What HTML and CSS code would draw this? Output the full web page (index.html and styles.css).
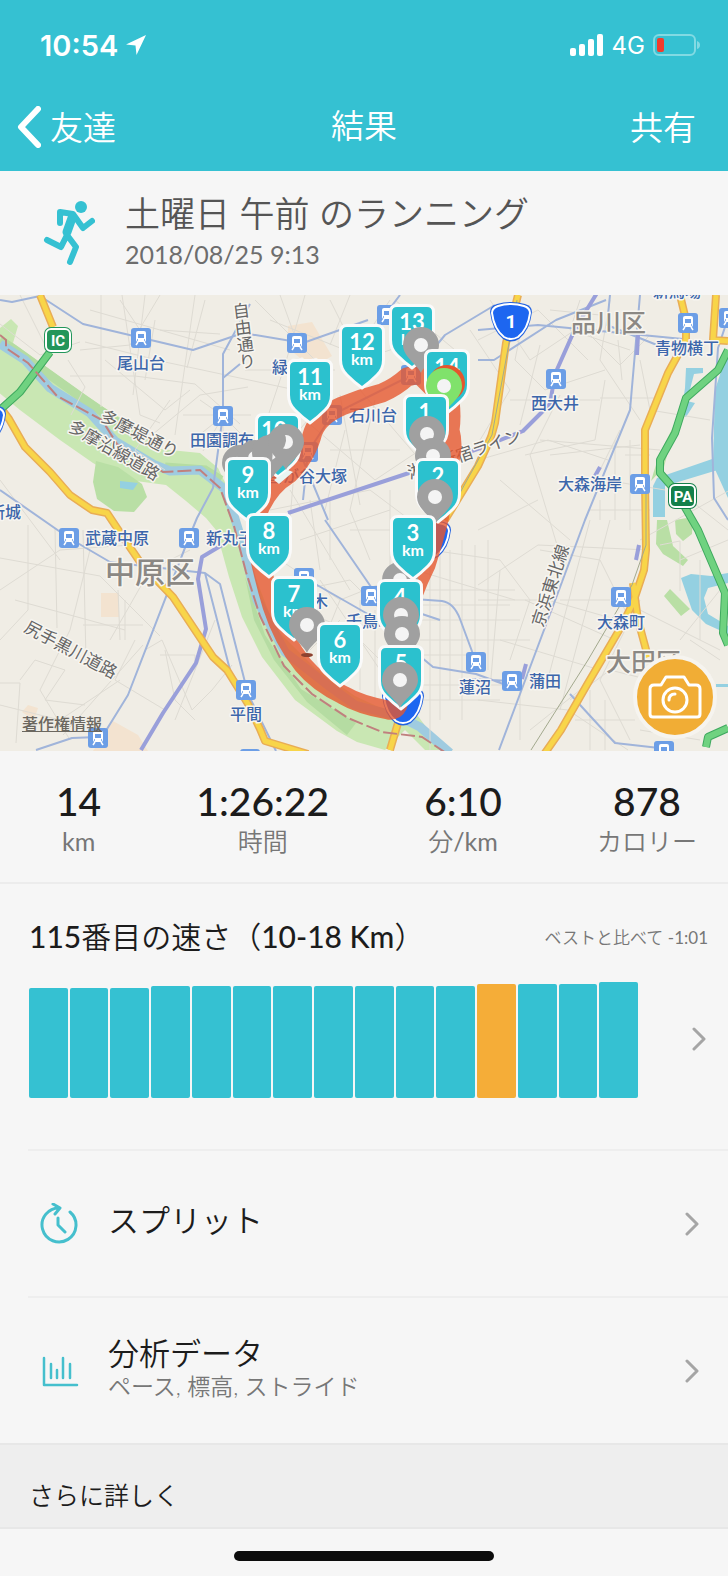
FILE: index.html
```
<!DOCTYPE html>
<html lang="ja">
<head>
<meta charset="utf-8">
<meta name="viewport" content="width=device-width, initial-scale=1">
<title>結果</title>
<link rel="stylesheet" href="styles.css">
</head>
<body>
<header class="top">
  <div class="status">
    <div class="status-left">
      <span class="clock">10:54</span>
      <svg class="locate" viewBox="0 0 20 20" aria-hidden="true"><path d="M20 0 10.500 20 9.500 10.500 0 9.500z"/></svg>
    </div>
    <div class="status-right">
      <svg class="signal" viewBox="0 0 34 22" aria-hidden="true"><rect x="0" y="14" width="6" height="8" rx="2"/><rect x="9" y="10" width="6" height="12" rx="2"/><rect x="18" y="5" width="6" height="17" rx="2"/><rect x="27" y="0" width="6" height="22" rx="2"/></svg>
      <span class="network">4G</span>
      <svg class="battery" viewBox="0 0 48 22" aria-hidden="true"><rect x="1" y="1" width="41" height="20" rx="5" fill="none" stroke="#82dae3" stroke-width="2"/><path d="M44 7q3 1 3 4t-3 4z" fill="#82dae3"/><rect x="4" y="4" width="7" height="14" rx="2" fill="#f23b2c"/></svg>
    </div>
  </div>
  <nav class="nav">
    <button class="nav-btn" type="button"><svg class="back" viewBox="0 0 24 42" aria-hidden="true"><path d="M21 3 4 21l17 18"/></svg>友達</button>
    <h1 class="nav-title">結果</h1>
    <button class="nav-btn nav-share" type="button">共有</button>
  </nav>
</header>

<main>
<section class="activity">
  <svg class="runner" viewBox="0 1 52 66" aria-hidden="true"><circle cx="38" cy="8" r="6"/><path d="M17 24V13l13 2 10 14 9-7M4 41l14 7 6-12 9 12-6 15" class="limbs"/><path d="M29 19l-5 14" class="limbs torso"/></svg>
  <div class="activity-text">
    <h2 class="activity-title">土曜日 午前 のランニング</h2>
    <time class="activity-date" datetime="2018-08-25T09:13">2018/08/25 9:13</time>
  </div>
</section>

<section class="map" aria-label="ルート">
<svg class="map-canvas" viewBox="0 295 728 456">
<defs>
  <g id="station"><rect x="-10" y="-10" width="20" height="20" rx="3" fill="#6c9ee6"/><rect x="-5" y="-7" width="10" height="11" rx="2" fill="#fff"/><rect x="-3" y="-4" width="6" height="4" fill="#6c9ee6"/><path d="M-4 2h1M3 2h1" stroke="#6c9ee6" stroke-width="1.500"/><path d="M-3 4-5 7M3 4 5 7" stroke="#fff" stroke-width="1.500"/></g>
  <path id="km-pin" d="M-20 5q0-5 5-5h30q5 0 5 5v28q0 8-6 14-7 7-14 12-7-5-14-12-6-6-6-14z"/>
  <g id="drop"><path d="M0 28C-3 20-18 12-18 0A18 18 0 0 1 18 0C18 12 3 20 0 28z"/><circle r="7" fill="#f4f4f4"/></g>
  <g id="shield"><path d="M-14-18Q0-22 14-18 21-16 21-10 19 8 8 17q-8 5-16 0Q-19 8-21-10q0-6 7-8z" fill="#2262e0"/><path d="M-13-16Q0-20 13-16 19-14 19-9 17 7 7 15q-7 4-14 0Q-17 7-19-9q0-5 6-7z" fill="#1d66f0" stroke="#fff" stroke-width="2"/></g>
</defs>
<rect y="295" width="728" height="456" fill="#f0ede5"/>

<g class="parks">
  <path d="M0 328l11-9 7 7-5 17 65 47 22 15 35 22 25 22 40 4 18 15 17 35 15 60 25 65 40 40 40 28 30 14 30 2 28 38h-18l-20-20-20 20-28-8-20-11-42-31-33-43-20-40-13-40-13-47-10-12-20-17-20-16-45-6-28-16-33-23-40-30-40-33z" fill="#c9e7b3"/>
  <path d="M0 340 15 350 85 400l35 24M165 467l40 3 16 10" fill="none" stroke="#b5dca2" stroke-width="9"/>
  <path d="M245 577l20 58 36 54 55 34-9 12-40-33-33-42-20-40z" fill="#b5dca2"/>
  <path d="M96 461l22 6 24 17 5 13-13 15-20-1-17-12-4-17z" fill="#b9dfa5"/>
  <path d="M676 421l-12 46-13 14 8-26z" fill="#b9dfa5"/>
  <path d="M721 425h7v28h-7zM657 520h10l6 26 15 14-5 6-20-12-7-10zM675 520l18-3-1 17-9 7-7-7zM670 589l20 20-9 7-17-20z" fill="#b9dfa5"/>
</g>
<g fill="#f3e3d0"><path d="M101 593h18v24h-18zM113 721l25 14 10 16h-55zM288 326l24-4 20 34-20 12-24-20zM28 705l10 3-4 12-12-8z"/></g>
<g class="water">
  <path d="M0 344 25 360 50 388l40 25 25 28 40 24 15 6 30-1 26 20 14 45 17 65 28 52 40 31 30 22 45 12 20 10 30 26" fill="none" stroke="#9fcbe0" stroke-width="9" stroke-linejoin="round"/>
  <path d="M686 368h17v5l-9 1-7 27 8 2-9 14-5-2 4-27z"/>
  <path d="M728 350l-13 40-2 75 15 33z"/>
  <path d="M718 457l-61 21-4 8v31h12v-31l56-17z"/>
  <path d="M681 578l10-4 20 2 17-3v10l-20 5-4 10 4 16 20 12v8l-22-10-14-14z"/>
  <path d="M120 481l18 2-5 7-13-2zM716 684h12v3h-12z"/>
</g>

<g class="streets">
  <path d="M0 324 40 355 80 342M68 360l17 27-14 28M80 350l50-5 30-50M20 295l30 60M85 342l80 20 140 30M101 295v112M122 295l18 120 20 8M145 295l-12 100M195 295l-20 140M205 300l-18 68M70 376h65l60 8 45 40M105 360l60 50 25-20M170 400l-35 50 30 20M140 445l60-50 48-8M90 310l140 40M160 330l60 4M145 380l10-60M183 415h68M193 440l30-24 30 30M200 400l23 16-20 35M223 395v45"/>
  <path d="M0 480l60 80M28 525v85l-28 30M0 558l100 18 60 60M55 528l2 100M83 530l3 130M0 590l60-40 70-5M15 600l110 30M83 625h60M125 600v40M118 590l2 50M135 640l-20 40 50 30M145 650l17-10 30 70 20-20 20-25M20 680l15-20 30 10-20 30 40 5M0 683h20l-4 60M0 705l60 15 60-40M63 735l80-90M165 650l10 50 20 20M160 655h35v15M90 550l-20 80-30 60 30 50M110 640l40-70 40-20M175 720l40-100"/>
  <path d="M255 300l60 60M280 295l18 50M305 295l-20 70-30 90M330 300l30 60 60-20M350 295l-20 50M270 320l100 40M390 300l-40 60M245 370h90M395 300l60 50M430 310v60M470 330l40 60-30 50M340 395l20 110M360 390l60 70M325 400l-60 70M305 420l70 60 60-40M330 450h70M345 430l-20 80M300 400l-10 120M375 400l-25 110 20 50M290 490l60 100M270 510l100-20 40 30M310 500l10 70M330 500v60M390 490v110M350 530h70M300 540l90-30M280 560l60 40 50-20"/>
  <path d="M300 590l50-10 60 60M320 580l60 90M340 600l-20 50M350 630l60 60M300 610l50 20 50-20M360 600v90M375 610v90M430 550l70 10M430 560v190M440 540v180M450 550v150M462 540v180M475 545v110M488 540v130M425 590h90M420 605h90M420 620h100M420 640h110M420 655h60M420 685h90M420 700h80M500 570l-10 120M415 570l100 30M310 650l30-30M120 300l20 30"/>
  <path d="M478 340l60-30 50 50M490 300l40 60 60-40M510 400h90M525 310l-10 50 30 30 60-20M540 345l-20 80M590 335l30 30 30-30M605 380l-10 60-70 15M560 395l-30 60 30 100M600 398h60M478 460l70-20 60 20M500 480l70 60M540 440l120 10M610 300l-10 60 40 60M620 430l-30 60M640 360l10 50 60 10M550 455l90-10M630 440v90M615 440v80M605 480l60 10M590 510h60M600 500v20M625 455h25M478 530l60-30M618 340l4 40M580 300l-10 30 60 20M550 310l50 5"/>
  <path d="M478 585l60-40 110 5M500 560l30 40-20 60M478 600h70l70 20M540 550l60 10 30 60M590 520l-45 170M610 520l-50 190M478 700l90 10 60 40M525 600l90 40M560 600h50M500 640l100 30M640 600l-40 80M600 680l30 60M640 610l80 40M680 560l48-20M640 540l90-50M690 500l38 30M680 640l40-50M690 640l30 20M650 680l-40-10-40 30M590 690v60M605 700v50M575 720h60M530 730l50-40M640 730l60 10M520 690v50M700 560v80M660 545l20-4v50"/>
</g>

<g class="rail">
  <path d="M0 300l12 2 28-6 43 28 110 26 50-17 60 10 65-23"/>
  <path d="M0 490 69 538 110 562l25 3 70 8 15 11 28 110 28 57M250 304l-27 50v60l-10 74-16 30-9 22-60 155-26 42M36 750l36-12 26-1M240 364l-17 14M205 573l25 97M303 500l5-48 24-37 80-40 33-40 50-30M400 295l-15 20M325 520l55 80 60 20M303 577l70 40 60 50 43 7 30 11M372 596l70 5q12 2 18 18l16 43M478 330l60-5 145 14M478 360h16l62-40 50-20M610 295l-3 30 50 20M640 295l-10 115-45 110-26 70-60 160M512 681l-40-2M570 694l45 49 53 6M728 318l-10 30-6 90 2 60 14 22M303 460l25 60"/>
</g>
<g class="rail-main">
  <path d="M288 513l130-43 65-23 40-16 27-27 5-30 20-45 22-36M222 545l-20 12-4 22 8 50-10 34-33 50-22 37M638 335l-1 20M600 467l-5 9M639 545l-3 15M526 664l-4 15"/>
</g>

<g class="road-case">
  <path d="M40 295 53 327M0 407l9 12 16 28 25 25 20 23 22 15 15 3 18 27 17 25 31 32 40 60 14 13 21 34 12 25 5 12 43 13M518 295 506 343 495 423 491 437 478 466 445 520M398 723l-8 27M680 295l6 25v20l-18 33-23 57v50l1 70-2 20-11 33-12 24-33 56-27 47-30 43M633 583l5 37 10 37M716 295l-3 45 15 1"/>
</g>
<g class="road">
  <path d="M40 295 53 327M0 407l9 12 16 28 25 25 20 23 22 15 15 3 18 27 17 25 31 32 40 60 14 13 21 34 12 25 5 12 43 13M518 295 506 343 495 423 491 437 478 466 445 520M398 723l-8 27M680 295l6 25v20l-18 33-23 57v50l1 70-2 20-11 33-12 24-33 56-27 47-30 43M633 583l5 37 10 37M716 295l-3 45 15 1"/>
</g>
<path d="M517 300 492 435 445 520M646 480v65l-14 40-44 75-57 90" fill="none" stroke="#a3a98e"/>
<g fill="none" stroke-linejoin="round"><path d="M50 352 20 392 0 410M728 350l-10 20-32 28-11 35-15 27v13l15 17 23 40 27 63-2 40 5 12M728 728l-20 9-2 10" stroke="#3fa95f" stroke-width="8"/><path d="M50 352 20 392 0 410M728 350l-10 20-32 28-11 35-15 27v13l15 17 23 40 27 63-2 40 5 12M728 728l-20 9-2 10" stroke="#6fd280" stroke-width="6"/></g>
<path d="M0 335l6 5v8l22 15 15 17 14 16 45 24 15 24 25 14 21 14 37-2 20 18 14 38 12 46 14 44 24 50 28 28 36 24 34 14 40 5 30 20" fill="none" stroke="#c0807e" stroke-width="2" stroke-dasharray="14 4"/>

<g class="badges">
  <use href="#shield" x="511" y="322"/><text x="511" y="328" class="badge-text">1</text>
  <use href="#shield" x="430" y="540"/>
  <use href="#shield" x="403" y="706"/>
  <use href="#shield" x="-15" y="424"/>
  <rect x="44" y="327" width="28" height="26" rx="7" fill="#23965a"/><rect x="46" y="329" width="24" height="22" rx="5" fill="#23965a" stroke="#fff" stroke-width="2"/><text x="58" y="346" class="badge-text badge-small">IC</text>
  <rect x="668" y="483" width="29" height="26" rx="7" fill="#14804a"/><rect x="670" y="485" width="25" height="22" rx="5" fill="#14804a" stroke="#fff" stroke-width="2"/><text x="683" y="502" class="badge-text badge-small">PA</text>
</g>

<use href="#station" x="141" y="338"/><use href="#station" x="297" y="343"/><use href="#station" x="387" y="315"/><use href="#station" x="332" y="415"/><use href="#station" x="308" y="452"/><use href="#station" x="556" y="379"/><use href="#station" x="688" y="323"/><use href="#station" x="729" y="318"/><use href="#station" x="640" y="484"/><use href="#station" x="223" y="416"/><use href="#station" x="69" y="538"/><use href="#station" x="189" y="538"/><use href="#station" x="98" y="738"/><use href="#station" x="246" y="690"/><use href="#station" x="304" y="578"/><use href="#station" x="371" y="596"/><use href="#station" x="476" y="662"/><use href="#station" x="250" y="759"/><use href="#station" x="621" y="597"/><use href="#station" x="512" y="681"/><use href="#station" x="664" y="751"/><use href="#station" x="411" y="375"/>

<g class="place">
  <text x="117" y="369">尾山台</text><text x="190" y="446">田園調布</text><text x="-11" y="518">新城</text><text x="272" y="373">緑が丘</text><text x="349" y="421">石川台</text><text x="267" y="482">雪が谷大塚</text><text x="655" y="354">青物横丁</text><text x="653" y="297">新馬場</text><text x="531" y="409">西大井</text><text x="558" y="490">大森海岸</text><text x="85" y="544">武蔵中原</text><text x="206" y="544">新丸子</text><text x="230" y="720">平間</text><text x="346" y="627">千鳥町</text><text x="280" y="607">鵜の木</text><text x="459" y="693">蓮沼</text><text x="529" y="687">蒲田</text><text x="597" y="628">大森町</text>
</g>
<g class="street-name">
  <text transform="translate(240 302) rotate(-7)" class="vertical">自由通り</text>
  <text transform="translate(99 420) rotate(27)">多摩堤通り</text>
  <text transform="translate(67 430) rotate(30)">多摩沿線道路</text>
  <text transform="translate(23 631) rotate(28)">尻手黒川道路</text>
  <text transform="translate(543 628) rotate(-72)">京浜東北線</text>
  <text transform="translate(410 479) rotate(-19)">湘南新宿ライン</text>
</g>
<g class="ward"><text x="571" y="332">品川区</text><text x="606" y="671">大田区</text><text x="105" y="583" class="ward-large">中原区</text></g>

<path class="route" d="M447 385q6 25 3 45 4 15 0 30-6 20-10 55-5 22-14 50-15 30-22 60l-5 45-1 35q-3 6-10 5-28-5-45-15-25-12-40-30-20-25-31-59-8-26-15-60-2-16 2-36 10-24 30-36 18-18 24-42 6-16 29-26 20-8 40-13 14-6 25-16l12-3 14 14 14 8"/>

<g class="pins">
  <use href="#km-pin" x="412" y="307"/><text x="412" y="330">13</text><text x="412" y="345" class="unit">km</text>
  <use href="#drop" x="421" y="345" class="grey"/>
  <use href="#km-pin" x="447" y="352"/><text x="447" y="375">14</text>
  <circle cx="447" cy="383" r="18" fill="#e4572e"/><use href="#drop" x="444" y="386" class="green"/>
  <use href="#km-pin" x="362" y="327"/><text x="362" y="350">12</text><text x="362" y="365" class="unit">km</text>
  <use href="#km-pin" x="278" y="416"/><text x="274" y="438">10</text>
  <path d="M274 480l14-10 5 2-14 12z" fill="#e8f4f3"/>
  <use href="#drop" x="240" y="463" class="grey"/><use href="#drop" x="255" y="458" class="grey"/>
  <path d="M262 439l20-14 18 27-32 24-18-8z" class="grey"/><use href="#drop" x="270" y="453" class="grey"/><path d="M257 443l12-3q5 7 3 22l-15-2z" class="grey"/>
  <use href="#drop" x="286" y="442" class="grey"/><path d="M275 433h9q5 8-2 17h-8z" class="grey"/>
  <use href="#km-pin" x="310" y="362"/><text x="310" y="385">11</text><text x="310" y="400" class="unit">km</text>
  <use href="#km-pin" x="248" y="460"/><text x="248" y="483">9</text><text x="248" y="498" class="unit">km</text>
  <use href="#km-pin" x="269" y="516"/><text x="269" y="539">8</text><text x="269" y="554" class="unit">km</text>
  <use href="#km-pin" x="294" y="579"/><text x="294" y="602">7</text><text x="294" y="617" class="unit">km</text>
  <ellipse cx="307" cy="655" rx="6" ry="2" fill="#8d4230"/><use href="#drop" x="307" y="625" class="grey"/>
  <use href="#km-pin" x="340" y="625"/><text x="340" y="648">6</text><text x="340" y="663" class="unit">km</text>
  <use href="#km-pin" x="426" y="397"/><text x="425" y="420">1</text>
  <use href="#drop" x="427" y="434" class="grey"/><use href="#drop" x="433" y="456" class="grey"/>
  <use href="#km-pin" x="438" y="461"/><text x="438" y="484">2</text><use href="#drop" x="435" y="497" class="grey"/>
  <use href="#drop" x="400" y="580" class="grey"/>
  <use href="#km-pin" x="413" y="518"/><text x="413" y="541">3</text><text x="413" y="556" class="unit">km</text>
  <use href="#km-pin" x="400" y="582"/><text x="400" y="605">4</text>
  <use href="#drop" x="401" y="615" class="grey"/><use href="#drop" x="402" y="634" class="grey"/>
  <use href="#km-pin" x="401" y="648"/><text x="401" y="671">5</text><use href="#drop" x="400" y="680" class="grey"/>
</g>
</svg>
<a class="legal" href="#legal">著作権情報</a>
<button class="camera" type="button" aria-label="写真を追加"><svg viewBox="0 0 54 44" aria-hidden="true"><path d="M2 14q0-4 4-4h7l5-8h18l5 8h7q4 0 4 4v25q0 3-3 3H5q-3 0-3-3z"/><circle cx="27" cy="25" r="12"/><path d="M21 25q0-6 6-6"/></svg></button>
</section>

<dl class="stats">
  <div class="stat"><dt><span class="latin">km</span></dt><dd>14</dd></div>
  <div class="stat"><dt>時間</dt><dd>1:26:22</dd></div>
  <div class="stat"><dt>分<span class="latin">/km</span></dt><dd>6:10</dd></div>
  <div class="stat"><dt>カロリー</dt><dd>878</dd></div>
</dl>

<section class="ranking">
  <div class="ranking-head">
    <h2 class="ranking-title"><b>115</b>番目の速さ（<b>10-18 Km</b>）</h2>
    <span class="ranking-note">ベストと比べて <span class="latin">-1:01</span></span>
  </div>
  <div class="ranking-body">
    <div class="bars" role="img" aria-label="速さの比較">
      <i style="height:110px"></i><i style="height:110px"></i><i style="height:110px"></i><i style="height:112px"></i><i style="height:112px"></i><i style="height:112px"></i><i style="height:112px"></i><i style="height:112px"></i><i style="height:112px"></i><i style="height:112px"></i><i style="height:112px"></i><i class="current" style="height:114px"></i><i style="height:114px"></i><i style="height:114px"></i><i style="height:116px"></i>
    </div>
    <svg class="chevron" viewBox="0 0 14 24" aria-hidden="true"><path d="M2 2l10 10L2 22"/></svg>
  </div>
</section>

<button class="row" type="button">
  <svg class="row-icon" viewBox="0 0 40 42" aria-hidden="true"><path d="M31 9a17 17 0 1 1-10-4M14 1l7 4-5 6M19 15v7l7 7" stroke-width="3"/></svg>
  <span class="row-text"><span class="row-title">スプリット</span></span>
  <svg class="chevron" viewBox="0 0 14 24" aria-hidden="true"><path d="M2 2l10 10L2 22"/></svg>
</button>
<button class="row" type="button">
  <svg class="row-icon" viewBox="0 0 40 42" aria-hidden="true"><path d="M5 8v27h33M12 14v14M18 20v8M24 8v20M31 14v14" stroke-width="2.500"/></svg>
  <span class="row-text"><span class="row-title">分析データ</span><span class="row-sub">ペース, 標高, ストライド</span></span>
  <svg class="chevron" viewBox="0 0 14 24" aria-hidden="true"><path d="M2 2l10 10L2 22"/></svg>
</button>
<h2 class="more">さらに詳しく</h2>
</main>
<footer class="home"><span class="home-bar"></span></footer>
</body>
</html>
```
FILE: styles.css
```
* { box-sizing: border-box; }
body { margin: 0; background: #f6f6f6; color: #1c1c1c; font-family: Lato, "Noto Sans CJK JP", sans-serif; font-weight: 350; }
h1, h2, dl, dd { margin: 0; font-weight: 350; }
button { border: 0; padding: 0; background: none; color: inherit; font: inherit; text-align: left; cursor: pointer; }
svg { display: block; }
.latin { font-weight: 400; }

.top { background: #35c1d2; color: #fff; }
.status { display: flex; justify-content: space-between; align-items: center; height: 90px; padding: 0 27px 0 40px; font-family: Inter, sans-serif; }
.status-left, .status-right { display: flex; align-items: center; gap: 8px; }
.clock { font-size: 29px; font-weight: 600; }
.locate { width: 20px; height: 20px; fill: #fff; }
.signal { width: 34px; height: 22px; fill: #fff; }
.network { font-size: 24px; font-weight: 400; }
.battery { width: 48px; height: 22px; }
.nav { display: grid; grid-template-columns: 1fr auto 1fr; align-items: center; height: 81px; padding: 0 32px 8px 17px; }
.nav-btn { display: flex; align-items: center; gap: 9px; font-size: 33px; line-height: 48px; }
.nav-share { justify-self: end; }
.nav-title { padding: 0 0 4px 15px; font-size: 33px; line-height: 48px; }
.back { width: 24px; height: 42px; fill: none; stroke: #fff; stroke-width: 6; stroke-linecap: round; stroke-linejoin: round; }

.activity { display: flex; align-items: center; gap: 30px; height: 124px; padding: 0 43px; }
.activity-text { padding-bottom: 4px; }
.runner { width: 52px; height: 66px; fill: #35c1d2; }
.limbs { fill: none; stroke: #35c1d2; stroke-width: 6; stroke-linecap: round; stroke-linejoin: round; }
.torso { stroke-width: 9; }
.activity-title { color: #555; font-size: 35px; line-height: 46px; }
.activity-date { display: block; color: #6d6d6d; font-size: 25px; font-weight: 400; line-height: 36px; }

.map { position: relative; overflow: hidden; }
.map-canvas { width: 100%; height: auto; font-family: "Noto Sans CJK JP", sans-serif; font-weight: 400; }
.water { fill: #94d0e1; }
.streets { fill: none; stroke: #dedbd3; stroke-width: 1; stroke-linejoin: round; }
.rail { fill: none; stroke: #a0b4da; stroke-width: 2; stroke-linejoin: round; }
.rail-main { fill: none; stroke: #999fda; stroke-width: 4; stroke-linejoin: round; }
.road-case, .road { fill: none; stroke-linejoin: round; }
.road-case { stroke: #e9ad55; stroke-width: 8; }
.road { stroke: #f8d549; stroke-width: 5; }
.badge-text { fill: #fff; font-family: Roboto, sans-serif; font-size: 19px; font-weight: 700; text-anchor: middle; }
.badge-small { font-size: 15px; }
.place text, .street-name text, .ward text { paint-order: stroke; stroke: #f7f5f0; stroke-width: 3px; stroke-linejoin: round; }
.place { fill: #3c66ab; font-size: 16px; font-weight: 500; }
.street-name { fill: #666; font-size: 17px; }
.vertical { writing-mode: vertical-rl; }
.ward { fill: #8b8884; font-size: 25px; font-weight: 500; }
.ward-large { font-size: 30px; }
.route { fill: none; stroke: #e6582f; stroke-opacity: .8; stroke-width: 19; stroke-linejoin: round; }
.pins use[href="#km-pin"] { fill: #2bc1ce; stroke: #fafafa; stroke-width: 6; paint-order: stroke; }
.pins text { fill: #fff; font-family: Lato, sans-serif; font-size: 22px; font-weight: 700; text-anchor: middle; }
.pins .unit { font-size: 16px; }
.grey { fill: #a0a0a0; }
.green { fill: #80e26b; }
.legal { position: absolute; left: 22px; bottom: 16px; color: #6b675f; font-family: "Noto Sans CJK JP", sans-serif; font-size: 16px; font-weight: 500; line-height: 24px; }
.camera { position: absolute; right: 11px; bottom: 12px; display: grid; place-items: center; width: 84px; height: 84px; border: 4px solid #f6f4ef; border-radius: 50%; background: #f1ad35; }
.camera svg { width: 54px; height: 44px; fill: none; stroke: #fff; stroke-width: 3; stroke-linecap: round; stroke-linejoin: round; }

.stats { display: flex; justify-content: space-between; padding: 26px 31px 25px 56px; border-bottom: 2px solid #ececec; }
.stat { display: flex; flex-direction: column-reverse; align-items: center; }
.stat dt { color: #777; font-size: 25px; line-height: 32px; }
.stat dd { font-size: 39px; font-weight: 500; line-height: 48px; }

.ranking { padding: 28px 20px 51px 29px; }
.ranking-head { display: flex; justify-content: space-between; align-items: center; }
.ranking-title { font-size: 30px; line-height: 48px; }
.ranking-title b { font-weight: 500; }
.ranking-note { padding-top: 4px; color: #777; font-size: 17px; line-height: 24px; }
.ranking-body { display: flex; justify-content: space-between; align-items: center; gap: 54px; padding: 20px 2px 0 0; }
.bars { flex: 1; display: flex; align-items: flex-end; gap: 2px; height: 118px; }
.bars i { flex: 1; border-radius: 2px; background: #35c1d2; }
.bars .current { background: #f5ad38; }
.chevron { flex: none; width: 14px; height: 24px; fill: none; stroke: #a5a5a5; stroke-width: 3; stroke-linecap: round; stroke-linejoin: round; }

.row { display: flex; align-items: center; width: calc(100% - 28px); height: 147px; margin-left: 28px; padding: 0 29px 0 11px; border-top: 2px solid #eee; }
.row-icon { width: 40px; height: 42px; margin-right: 29px; fill: none; stroke: #45bfcd; stroke-linecap: round; stroke-linejoin: round; }
.row-text { display: flex; flex-direction: column; padding-bottom: 8px; }
.row-title { font-size: 31px; line-height: 38px; }
.row-sub { color: #777; font-size: 23px; line-height: 28px; }
.row .chevron { margin-left: auto; }
.more { padding: 30px 29px 12px; border: solid #e7e7e7; border-width: 2px 0; background: #eee; font-size: 25px; line-height: 40px; }
.home { display: flex; justify-content: center; padding: 22px 0 16px; }
.home-bar { width: 260px; height: 10px; border-radius: 5px; background: #0c0c0c; }
```
